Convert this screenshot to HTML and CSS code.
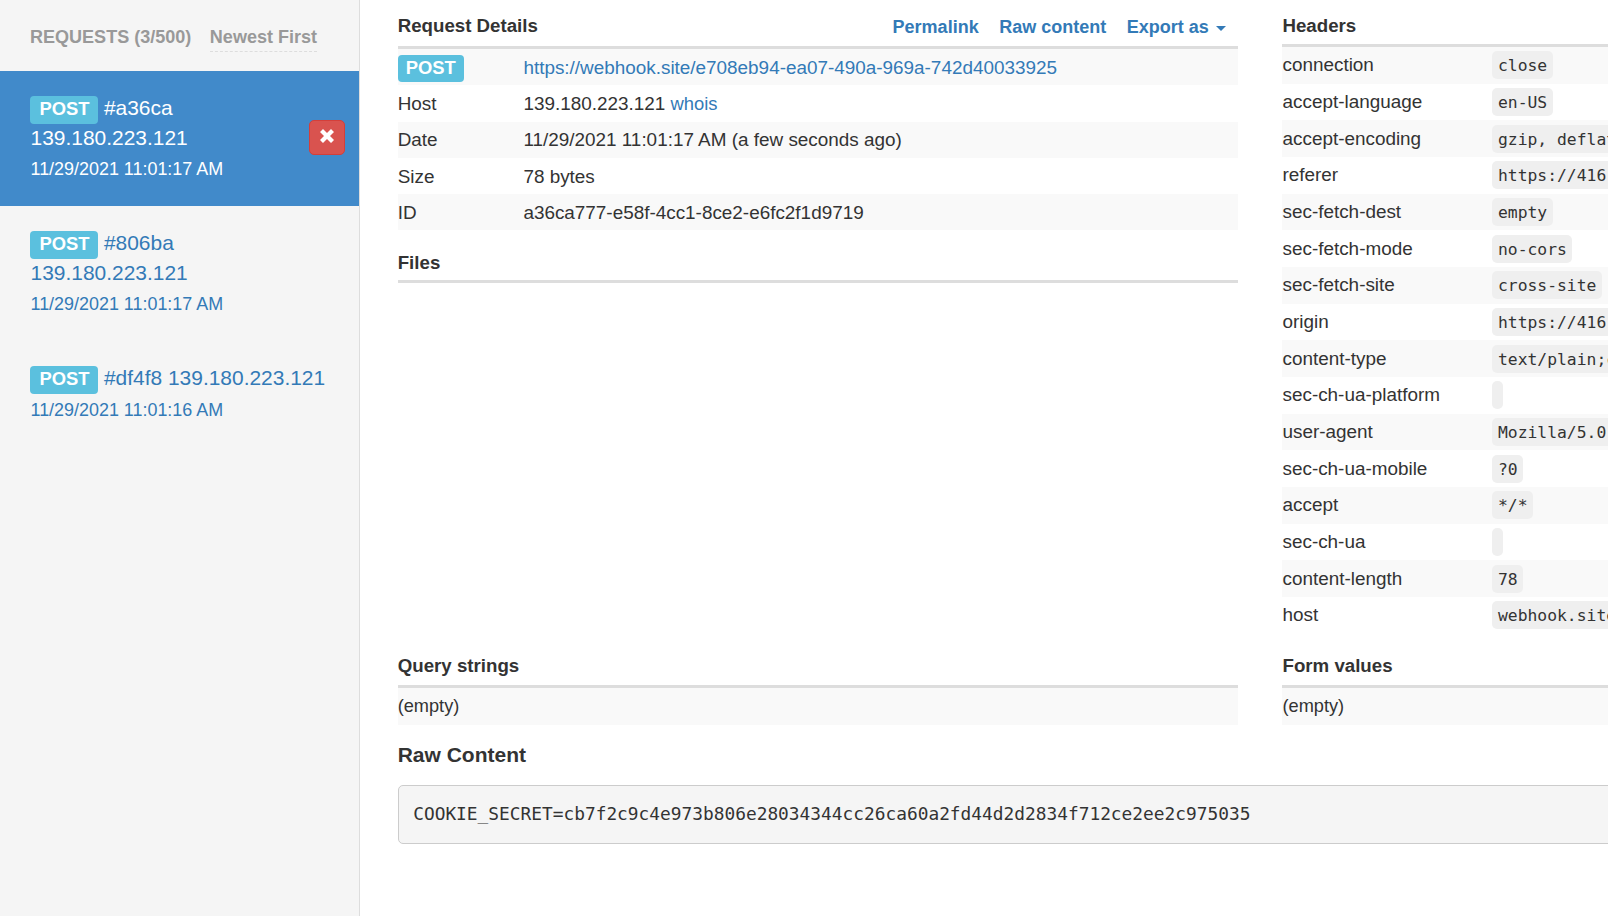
FILE: index.html
```html
<!DOCTYPE html>
<html lang="en">
<head>
<meta charset="utf-8">
<title>Webhook.site</title>
<link rel="stylesheet" href="styles.css">
</head>
<body>
<div class="app">
  <aside class="sidebar">
    <div class="side-head">
      <span class="side-title">REQUESTS (3/500)</span>
      <a class="sort">Newest First</a>
    </div>
    <div class="req active">
      <span class="label">POST</span> <span>#a36ca</span> <span>139.180.223.121</span>
      <div class="req-date">11/29/2021 11:01:17 AM</div>
      <button class="del" aria-label="Delete">
        <svg class="del-icon" viewBox="0 0 16 16" width="16" height="16"><path d="M4 1 8 5l4-4 3 3-4 4 4 4-3 3-4-4-4 4-3-3 4-4-4-4z" fill="#fff"/></svg>
      </button>
    </div>
    <div class="req">
      <span class="label">POST</span> <span>#806ba</span> <span>139.180.223.121</span>
      <div class="req-date">11/29/2021 11:01:17 AM</div>
    </div>
    <div class="req">
      <span class="label">POST</span> <span>#df4f8</span> <span>139.180.223.121</span>
      <div class="req-date">11/29/2021 11:01:16 AM</div>
    </div>
  </aside>
  <main class="main">
    <div class="panels">
      <section class="col-left">
        <div class="head">
          <h4>Request Details</h4>
          <nav class="actions">
            <a>Permalink</a>
            <a>Raw content</a>
            <a>Export as <i class="caret"></i></a>
          </nav>
        </div>
        <div class="row"><div class="key"><span class="label">POST</span></div><div><a>https://webhook.site/e708eb94-ea07-490a-969a-742d40033925</a></div></div>
        <div class="row"><div class="key">Host</div><div>139.180.223.121 <a class="whois">whois</a></div></div>
        <div class="row"><div class="key">Date</div><div>11/29/2021 11:01:17 AM (a few seconds ago)</div></div>
        <div class="row"><div class="key">Size</div><div>78 bytes</div></div>
        <div class="row"><div class="key">ID</div><div>a36ca777-e58f-4cc1-8ce2-e6fc2f1d9719</div></div>
        <div class="head head-files"><h4>Files</h4></div>
      </section>
      <section class="col-right">
        <div class="head head-right"><h4>Headers</h4></div>
        <div class="hrow"><div class="hkey">connection</div><code>close</code></div>
        <div class="hrow"><div class="hkey">accept-language</div><code>en-US</code></div>
        <div class="hrow"><div class="hkey">accept-encoding</div><code>gzip, deflate, br</code></div>
        <div class="hrow"><div class="hkey">referer</div><code>https://416.example/</code></div>
        <div class="hrow"><div class="hkey">sec-fetch-dest</div><code>empty</code></div>
        <div class="hrow"><div class="hkey">sec-fetch-mode</div><code>no-cors</code></div>
        <div class="hrow"><div class="hkey">sec-fetch-site</div><code>cross-site</code></div>
        <div class="hrow"><div class="hkey">origin</div><code>https://416.example</code></div>
        <div class="hrow"><div class="hkey">content-type</div><code>text/plain;charset=UTF-8</code></div>
        <div class="hrow"><div class="hkey">sec-ch-ua-platform</div><code></code></div>
        <div class="hrow"><div class="hkey">user-agent</div><code>Mozilla/5.0 (X11; Linux x86_64)</code></div>
        <div class="hrow"><div class="hkey">sec-ch-ua-mobile</div><code>?0</code></div>
        <div class="hrow"><div class="hkey">accept</div><code>*/*</code></div>
        <div class="hrow"><div class="hkey">sec-ch-ua</div><code></code></div>
        <div class="hrow"><div class="hkey">content-length</div><code>78</code></div>
        <div class="hrow"><div class="hkey">host</div><code>webhook.site</code></div>
      </section>
      <section class="col-left">
        <div class="head head-low"><h4>Query strings</h4></div>
        <div class="empty">(empty)</div>
      </section>
      <section class="col-right">
        <div class="head head-low"><h4>Form values</h4></div>
        <div class="empty">(empty)</div>
      </section>
    </div>
    <h3 class="raw-title">Raw Content</h3>
    <pre class="raw">COOKIE_SECRET=cb7f2c9c4e973b806e28034344cc26ca60a2fd44d2d2834f712ce2ee2c975035</pre>
  </main>
</div>
</body>
</html>
```
FILE: styles.css
```css
* { box-sizing: border-box; }
html, body { margin: 0; height: 100%; overflow: hidden; background: #fff; }
body { font-family: "Liberation Sans", Arial, sans-serif; font-size: 18.9px; line-height: 26px; color: #333; }
a { color: #337ab7; text-decoration: none; }

.app { display: flex; height: 916px; width: 1608px; overflow: hidden; }

.sidebar { flex: 0 0 360px; background: #f5f5f5; border-right: 1px solid #ddd; }
.side-head { height: 71px; padding: 24px 0 0 30px; display: flex; align-items: flex-start; gap: 18.5px; font-weight: 700; color: #999; font-size: 18.05px; }
.sort { color: #999; border-bottom: 1px dashed #ddd; padding-bottom: 1px; height: 28px; }

.req { position: relative; height: 135px; padding: 22px 30px 0 30.5px; font-size: 20.95px; line-height: 29.5px; color: #337ab7; }
.req:last-child { height: 92px; }
.req.active { background: #418aca; color: #fff; }
.req-date { font-size: 17.93px; line-height: 25px; margin-top: 5px; }

.label { display: inline-block; background: #5bc0de; color: #fff; font-weight: 700; font-size: 18.4px; line-height: 26.5px; height: 28px; padding: 0 8.5px 0 9.5px; border-radius: 4px; vertical-align: top; margin: 3px 0 -3px -0.5px; }

.del { position: absolute; left: 309px; top: 49px; width: 35.5px; height: 35px; padding: 0; display: flex; align-items: center; justify-content: center; background: #d9534f; border: 1px solid #d43f3a; border-radius: 5px; }
.del-icon { margin-bottom: 3px; }

.main { flex: 1 1 auto; min-width: 0; padding-left: 37.7px; padding-top: 13px; }
.panels { display: grid; grid-template-columns: 840px 1fr; column-gap: 44.8px; grid-template-rows: 640.2px auto; width: 1210.3px; }
.col-right { min-width: 0; }

.head { display: flex; justify-content: space-between; align-items: flex-end; height: 25px; padding-bottom: 8px; border-bottom: 3px solid #ddd; box-sizing: content-box; }
.head-right { padding-bottom: 6px; }
.head-files { margin-top: 20px; padding-bottom: 5px; }
.head-low { padding-bottom: 7px; }
h4 { margin: 0; font-size: 18.7px; font-weight: 700; line-height: 25px; color: #333; }

.actions { display: flex; gap: 20.5px; font-weight: 700; font-size: 18px; line-height: 25px; margin-right: 12px; position: relative; top: 2px; }
.caret { display: inline-block; width: 0; height: 0; margin-left: 2px; vertical-align: middle; border-top: 5.5px solid #337ab7; border-left: 5.5px solid transparent; border-right: 5.5px solid transparent; }

.row { display: grid; grid-template-columns: 125.7px 1fr; align-items: center; height: 36.3px; padding-top: 1px; white-space: nowrap; }
.row:nth-of-type(even) { background: #f9f9f9; }
.whois { font-size: 18.4px; }
.key .label { display: block; width: 66px; text-align: center; padding: 0; margin: 1px 0 0; height: 27px; line-height: 26px; }

.hrow { display: grid; grid-template-columns: 210px auto; justify-content: start; align-items: center; height: 36.67px; white-space: nowrap; }
.hrow:nth-of-type(even) { background: #f9f9f9; }
code { justify-self: start; font-family: "DejaVu Sans Mono", monospace; font-size: 16.35px; line-height: 29px; height: 28px; padding: 0 5.5px; background: #efefef; border-radius: 5px; color: #333; }

.empty { height: 37px; line-height: 36px; background: #f9f9f9; font-size: 18.2px; }
.col-right .empty { width: 400px; }

.raw-title { margin: 16px 0 0; font-size: 21px; font-weight: 700; line-height: 28px; color: #333; }
.raw { margin: 16px 0 0; width: 1400px; height: 59px; padding: 0 14.5px; background: #f5f5f5; border: 1px solid #ccc; border-radius: 5px; font-family: "DejaVu Sans Mono", monospace; font-size: 17.83px; line-height: 56px; color: #333; }
```
